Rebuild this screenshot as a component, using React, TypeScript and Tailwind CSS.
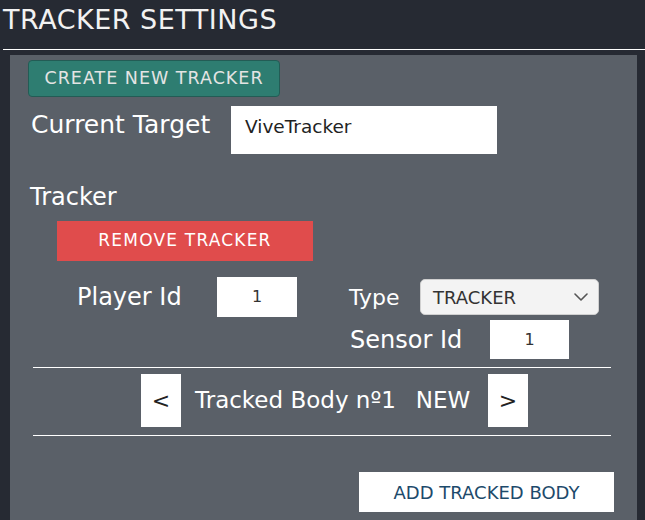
const font = { fontFamily: '"DejaVu Sans", "Liberation Sans", sans-serif' };

const NumberBox = ({ value, className }: { value: string; className: string }) => (
  <div className={`bg-white flex items-center justify-center text-[16px] text-[#333] ${className}`}>
    {value}
  </div>
);

export default function App() {
  return (
    <div className="w-[645px] h-[520px] overflow-hidden bg-[#262a33] text-white" style={font}>
      {/* Header */}
      <div className="h-[49px] pl-[3px] pt-[5px]">
        <h1 className="text-[27px] leading-[30px] tracking-[0.5px] text-[#f2f2f2]">TRACKER SETTINGS</h1>
      </div>
      <div className="ml-[3px] h-px bg-white" />

      {/* Panel */}
      <div className="ml-[10px] mt-[5px] w-[627px] h-[470px] bg-[#5a6068]">
        <div className="pt-[5px] pl-[18px]">
          <button className="w-[252px] h-[37px] rounded-[4px] bg-[#2e7d71] border border-[#235c55] text-[17.5px] tracking-[1px] text-[#e4e4e4]">
            CREATE NEW TRACKER
          </button>
        </div>

        {/* Current target */}
        <div className="flex items-start mt-[9px]">
          <span className="ml-[21px] mt-[6px] w-[200px] text-[25px] leading-[25px]">Current Target</span>
          <div className="w-[266px] h-[48px] bg-white pl-[14px] pt-[12px] text-[18.5px] leading-[18px] text-[#222]">
            ViveTracker
          </div>
        </div>

        {/* Tracker */}
        <div className="ml-[20px] mt-[31px] text-[24px] leading-[24px]">Tracker</div>
        <div className="ml-[47px] mt-[12px] w-[256px] h-[40px] bg-[#e04c4c] flex items-center justify-center text-[17px] tracking-[1.2px]">
          REMOVE TRACKER
        </div>

        {/* Ids and type */}
        <div className="flex items-start mt-[16px]">
          <div className="flex items-center ml-[67px] w-[220px]">
            <span className="w-[140px] text-[24px]">Player Id</span>
            <NumberBox value="1" className="w-[80px] h-[40px]" />
          </div>
          <div className="ml-[52px] mt-[2px] flex flex-col">
            <div className="flex items-center">
              <span className="w-[71px] text-[22px]">Type</span>
              <div className="w-[179px] h-[36px] rounded-[5px] bg-[#f3f3f3] border border-[#d0d0d0] flex items-center justify-between pl-[12px] pr-[10px]">
                <span className="text-[18px] text-[#333]">TRACKER</span>
                <svg width="14" height="8" viewBox="0 0 14 8" fill="none">
                  <path d="M1 1l6 6 6-6" stroke="#555" strokeWidth="1.6" strokeLinecap="round" strokeLinejoin="round" />
                </svg>
              </div>
            </div>
            <div className="flex items-center mt-[5px]">
              <span className="ml-[1px] w-[140px] text-[24px]">Sensor Id</span>
              <NumberBox value="1" className="w-[79px] h-[39px]" />
            </div>
          </div>
        </div>

        {/* Body navigation */}
        <div className="ml-[23px] mt-[8px] w-[578px] h-px bg-white" />
        <div className="flex items-center mt-[6px] ml-[131px] h-[53px]">
          <div className="w-[40px] h-[53px] bg-white flex items-center justify-center text-[22px] text-[#222]">&lt;</div>
          <span className="ml-[14px] text-[23px]">Tracked Body nº1</span>
          <span className="ml-[20px] text-[23px]">NEW</span>
          <div className="ml-auto mr-[109px] w-[40px] h-[53px] bg-white flex items-center justify-center text-[22px] text-[#222]">&gt;</div>
        </div>
        <div className="ml-[23px] mt-[8px] w-[578px] h-px bg-white" />

        <div className="flex justify-end mt-[36px] mr-[23px]">
          <button className="w-[255px] h-[40px] bg-white text-[18px] text-[#1d4a6b]">ADD TRACKED BODY</button>
        </div>
      </div>
    </div>
  );
}
